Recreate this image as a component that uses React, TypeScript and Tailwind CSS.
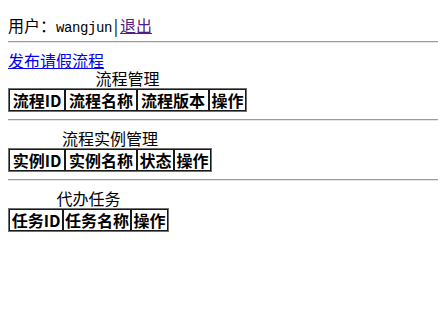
import React from "react";

const cjk = { fontFamily: '"Noto Sans CJK SC", "Noto Sans", sans-serif' };

function Hr() {
  return <div className="h-[2px] -mr-[8px] border-t border-b border-t-[#9a9a9a] border-b-[#e6e6e6]" />;
}

function Table({ caption, cols }: { caption: string; cols: [string, number][] }) {
  return (
    <table className="border-separate border-spacing-0 border border-[#707070]">
      <caption className="h-[18px] text-[16px] leading-[16px] font-normal text-center">{caption}</caption>
      <thead>
        <tr>
          {cols.map(([c, w]) => (
            <th
              key={c}
              style={{ width: w }}
              className="h-[22px] p-0 border border-[#1a1a1a] text-[16px] leading-[16px] font-bold text-center whitespace-nowrap"
            >
              {c}
            </th>
          ))}
        </tr>
      </thead>
    </table>
  );
}

export default function App() {
  return (
    <div className="bg-white text-black pl-[8px] pr-[8px] min-h-[313px]" style={cjk}>
      <div className="pt-[17px] h-[33px] text-[16px] leading-[16px] whitespace-nowrap">
        用户：
        <span style={{ fontFamily: '"Liberation Mono", monospace' }} className="text-[14px] tracking-[-0.4px]">
          wangjun
        </span>
        <span className="inline-block w-[8px] text-center">|</span>
        <a href="#" className="text-[#551a8b] underline">退出</a>
      </div>
      <div className="mt-[8px]">
        <Hr />
      </div>
      <div className="mt-[9px] h-[16px] text-[16px] leading-[16px]">
        <a href="#" className="text-[#0000ee] underline">发布请假流程</a>
      </div>
      <div className="mt-[2px]">
        <Table caption="流程管理" cols={[["流程ID", 56], ["流程名称", 72], ["流程版本", 72], ["操作", 37]]} />
      </div>
      <div className="mt-[7px]">
        <Hr />
      </div>
      <div className="mt-[9px]">
        <Table caption="流程实例管理" cols={[["实例ID", 56], ["实例名称", 72], ["状态", 37], ["操作", 37]]} />
      </div>
      <div className="mt-[7px]">
        <Hr />
      </div>
      <div className="mt-[9px]">
        <Table caption="代办任务" cols={[["任务ID", 54], ["任务名称", 68], ["操作", 37]]} />
      </div>
    </div>
  );
}
